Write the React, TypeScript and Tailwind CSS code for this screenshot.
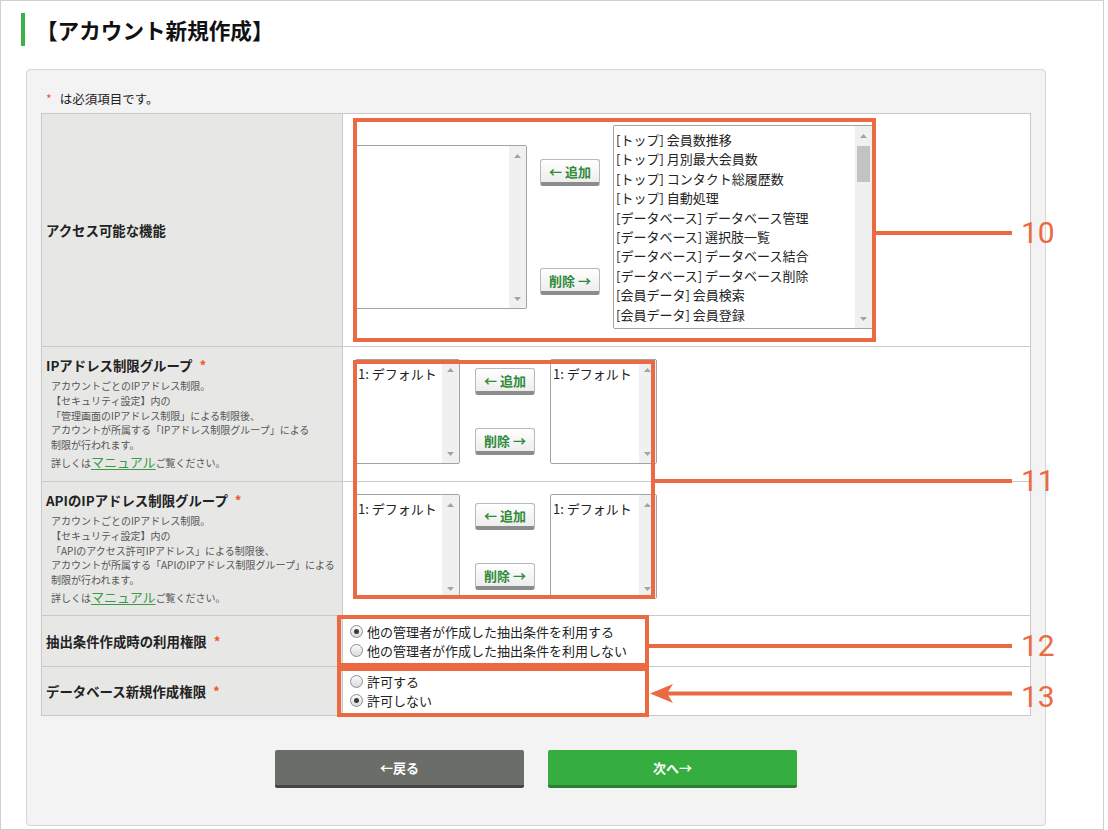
import React from "react";

const accessItems = [
  "[トップ] 会員数推移",
  "[トップ] 月別最大会員数",
  "[トップ] コンタクト総履歴数",
  "[トップ] 自動処理",
  "[データベース] データベース管理",
  "[データベース] 選択肢一覧",
  "[データベース] データベース結合",
  "[データベース] データベース削除",
  "[会員データ] 会員検索",
  "[会員データ] 会員登録",
];

function Scroller({ thumb }: { thumb?: boolean }) {
  return (
    <div className="w-[17px] shrink-0 bg-[#f0f0f0] flex flex-col items-center">
      <svg width="7" height="4" className="mt-[8px]">
        <path d="M3.5 0L7 4H0z" fill="#a3a3a3" />
      </svg>
      {thumb && <div className="mt-[8px] w-[13px] h-[36px] bg-[#c3c3c3]" />}
      <svg width="7" height="4" className="mt-auto mb-[7px]">
        <path d="M0 0H7L3.5 4z" fill="#a3a3a3" />
      </svg>
    </div>
  );
}

function ListBox({ items, className, thumb }: { items: string[]; className: string; thumb?: boolean }) {
  return (
    <div className={`flex shrink-0 overflow-hidden rounded-[2px] border border-[#a3a3a3] bg-white ${className}`}>
      <div className="flex-1 min-w-0 overflow-hidden whitespace-nowrap pl-[2px] pt-[4px] text-[13px] leading-[19.4px] text-[#222]">
        {items.map((it) => (
          <div key={it}>{it}</div>
        ))}
      </div>
      <Scroller thumb={thumb} />
    </div>
  );
}

function MoveButton({ label }: { label: string }) {
  return (
    <div className="flex h-[27px] w-[60px] items-center justify-center rounded-[3px] border border-[#b8b8b8] border-b-[4px] border-b-[#8c8c8c] bg-linear-to-b from-white to-[#ededed] text-[13px] font-bold leading-none text-[#2f8a37]">
      {label}
    </div>
  );
}

function Radio({ checked }: { checked?: boolean }) {
  return (
    <span className="flex h-[13px] w-[13px] shrink-0 items-center justify-center rounded-full border border-[#8e8e8e] bg-linear-to-b from-[#fbfbfb] to-[#dadada]">
      {checked && <span className="h-[5px] w-[5px] rounded-full bg-[#3a3a3a]" />}
    </span>
  );
}

function Star() {
  return <span className="ml-[7px] text-[#ee5a2c]">*</span>;
}

function Description({ lines }: { lines: string[] }) {
  return (
    <div className="mt-[5px] pl-[5px] text-[10px] leading-[14.8px] text-[#555] whitespace-nowrap">
      {lines.map((l) => (
        <div key={l}>{l}</div>
      ))}
      <div className="leading-[17px]">
        詳しくは<span className="text-[13px] text-[#3a9a47] underline underline-offset-2">マニュアル</span>ご覧ください。
      </div>
    </div>
  );
}

function IpControls() {
  return (
    <div className="flex items-center gap-[15px]">
      <ListBox items={["1: デフォルト"]} className="ml-[2px] w-[105px] h-[105px]" />
      <div className="flex h-[87px] flex-col justify-between">
        <MoveButton label="← 追加" />
        <MoveButton label="削除 →" />
      </div>
      <ListBox items={["1: デフォルト"]} className="w-[107px] h-[105px]" />
    </div>
  );
}

export default function App() {
  return (
    <div
      className="relative h-[830px] w-[1104px] border border-[#cfcfcf] bg-white text-[#222]"
      style={{ fontFamily: '"Noto Sans CJK JP", "Noto Sans", sans-serif' }}
    >
      {/* page title */}
      <div className="ml-[20px] mt-[12px] flex h-[33px] items-center border-l-4 border-[#3cb04a] pl-[11px]">
        <h1 className="text-[21.6px] font-bold leading-none text-[#111]">【アカウント新規作成】</h1>
      </div>

      {/* form panel */}
      <div className="ml-[25px] mt-[23px] w-[1020px] rounded-[4px] border border-[#d6d6d6] bg-[#f3f3f3] px-[14px] pb-[37px] pt-[20px]">
        <p className="mb-[5px] pl-[5px] text-[12.5px] leading-[18px]">
          <span className="mr-[8px] text-[#ee5a2c]">*</span>は必須項目です。
        </p>

        <div className="w-[990px] border border-b-0 border-[#c9c9c9]">
          {/* row: access */}
          <div className="flex h-[233px] border-b border-[#c9c9c9]">
            <div className="flex w-[301px] shrink-0 items-center border-r border-[#c9c9c9] bg-[#e7e8e6] pl-[4px] text-[13.4px] font-bold">
              アクセス可能な機能
            </div>
            <div className="flex-1 bg-white pl-[10px] pt-[11px]">
              <div className="flex items-center gap-[13px]">
                <ListBox items={[]} className="w-[174px] h-[164px]" />
                <div className="flex h-[136px] flex-col justify-between">
                  <MoveButton label="← 追加" />
                  <MoveButton label="削除 →" />
                </div>
                <ListBox items={accessItems} className="w-[260px] h-[204px]" thumb />
              </div>
            </div>
          </div>

          {/* row: ip group */}
          <div className="flex h-[135px] border-b border-[#c9c9c9]">
            <div className="w-[301px] shrink-0 border-r border-[#c9c9c9] bg-[#e7e8e6] pl-[4px] pt-[9px]">
              <div className="text-[13.4px] font-bold leading-[18px]">
                IPアドレス制限グループ<Star />
              </div>
              <Description
                lines={[
                  "アカウントごとのIPアドレス制限。",
                  "【セキュリティ設定】内の",
                  "「管理画面のIPアドレス制限」による制限後、",
                  "アカウントが所属する「IPアドレス制限グループ」による",
                  "制限が行われます。",
                ]}
              />
            </div>
            <div className="flex-1 bg-white pl-[10px] pt-[12px]">
              <IpControls />
            </div>
          </div>

          {/* row: api ip group */}
          <div className="flex h-[134px] border-b border-[#c9c9c9]">
            <div className="w-[301px] shrink-0 border-r border-[#c9c9c9] bg-[#e7e8e6] pl-[4px] pt-[9px]">
              <div className="text-[13.4px] font-bold leading-[18px]">
                APIのIPアドレス制限グループ<Star />
              </div>
              <Description
                lines={[
                  "アカウントごとのIPアドレス制限。",
                  "【セキュリティ設定】内の",
                  "「APIのアクセス許可IPアドレス」による制限後、",
                  "アカウントが所属する「APIのIPアドレス制限グループ」による",
                  "制限が行われます。",
                ]}
              />
            </div>
            <div className="flex-1 bg-white pl-[10px] pt-[12px]">
              <IpControls />
            </div>
          </div>

          {/* row: extraction permission */}
          <div className="flex h-[51px] border-b border-[#c9c9c9]">
            <div className="flex w-[301px] shrink-0 items-center border-r border-[#c9c9c9] bg-[#e7e8e6] pl-[4px] text-[13.4px] font-bold">
              抽出条件作成時の利用権限<Star />
            </div>
            <div className="flex flex-1 flex-col justify-center bg-white pl-[7px] text-[13px]">
              <label className="flex h-[19px] items-center gap-[4px]">
                <Radio checked />他の管理者が作成した抽出条件を利用する
              </label>
              <label className="flex h-[19px] items-center gap-[4px]">
                <Radio />他の管理者が作成した抽出条件を利用しない
              </label>
            </div>
          </div>

          {/* row: database permission */}
          <div className="flex h-[49px] border-b border-[#c9c9c9]">
            <div className="flex w-[301px] shrink-0 items-center border-r border-[#c9c9c9] bg-[#e7e8e6] pl-[4px] text-[13.4px] font-bold">
              データベース新規作成権限<Star />
            </div>
            <div className="flex flex-1 flex-col justify-center bg-white pl-[7px] text-[13px]">
              <label className="flex h-[19px] items-center gap-[4px]">
                <Radio />許可する
              </label>
              <label className="flex h-[19px] items-center gap-[4px]">
                <Radio checked />許可しない
              </label>
            </div>
          </div>
        </div>

        {/* footer buttons */}
        <div className="mt-[34px] flex justify-center gap-[24px]">
          <button className="flex h-[38px] w-[249px] items-center justify-center rounded-[2px] border-b-[3px] border-[#454545] bg-[#6a6d68] text-[13px] font-bold text-white">
            ←戻る
          </button>
          <button className="flex h-[38px] w-[249px] items-center justify-center rounded-[2px] border-b-[3px] border-[#2a7f31] bg-[#35ae3f] text-[13px] font-bold text-white">
            次へ→
          </button>
        </div>
      </div>

      {/* annotation overlays */}
      <div className="absolute left-[352px] top-[117px] h-[224px] w-[523px] border-4 border-[#ec6a42]" />
      <div className="absolute left-[875px] top-[230px] h-[4px] w-[136px] bg-[#ec6a42]" />
      <div className="absolute left-[352px] top-[359px] h-[239px] w-[302px] border-4 border-[#ec6a42]" />
      <div className="absolute left-[654px] top-[478px] h-[4px] w-[357px] bg-[#ec6a42]" />
      <div className="absolute left-[336px] top-[614px] h-[52px] w-[312px] border-4 border-[#ec6a42]" />
      <div className="absolute left-[648px] top-[643px] h-[4px] w-[363px] bg-[#ec6a42]" />
      <div className="absolute left-[336px] top-[666px] h-[50px] w-[312px] border-4 border-[#ec6a42]" />
      <svg className="absolute left-[648px] top-[681px]" width="363" height="22">
        <rect x="12" y="9.5" width="351" height="4" fill="#ec6a42" />
        <path d="M1 11.5L24 2L18 11.5L24 21Z" fill="#ec6a42" />
      </svg>

      {[
        { n: "10", top: "top-[212px]" },
        { n: "11", top: "top-[460px]" },
        { n: "12", top: "top-[625px]" },
        { n: "13", top: "top-[676px]" },
      ].map((l) => (
        <div
          key={l.n}
          className={`absolute left-[1020px] ${l.top} flex h-[40px] items-center text-[30px] leading-[40px] text-[#ec6a42]`}
          style={{ fontFamily: "Roboto, sans-serif" }}
        >
          {l.n}
        </div>
      ))}
    </div>
  );
}
